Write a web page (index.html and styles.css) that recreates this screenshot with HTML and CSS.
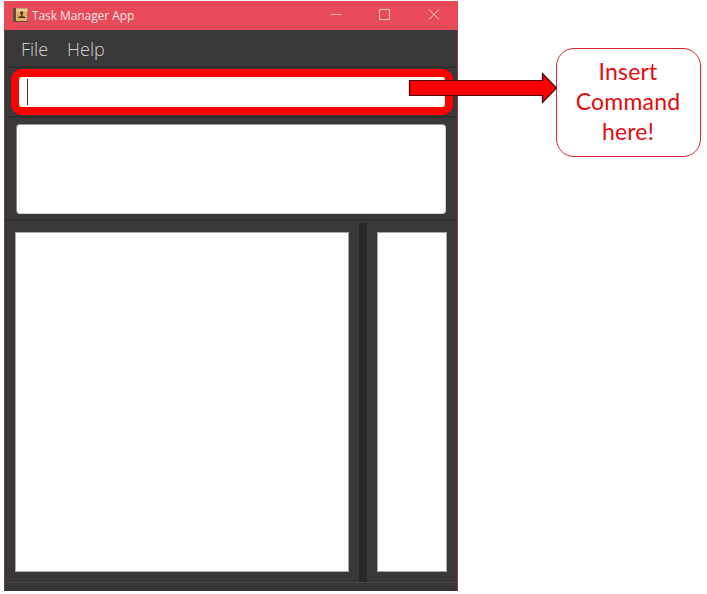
FILE: index.html
```html
<!DOCTYPE html>
<html lang="en">
<head>
<meta charset="utf-8">
<title>Task Manager App</title>
<link rel="stylesheet" href="styles.css">
</head>
<body>
<main class="stage">
  <section class="window">
    <header class="titlebar">
      <svg class="app-icon" width="15" height="14" viewBox="0 0 15 14">
        <rect width="15" height="14" rx="1" fill="#5d4a3a"/>
        <rect x="3" y="0.5" width="11.5" height="12.5" fill="#dfae66"/>
        <path d="M3 .5h11.500v3H3z" fill="#ecc98c"/>
        <circle cx="8.700" cy="4.800" r="1.600" fill="#4a341c"/>
        <path d="M8 6h1.500v2.200l2.700.5v1.300H5.200V8.700l2.800-.5z" fill="#4a341c"/>
      </svg>
      <span class="title">Task Manager App</span>
      <svg class="controls" width="110" height="12" viewBox="0 0 110 12" fill="none" stroke="#ffc4ca">
        <path d="M0 5.500h10.500M48.500 .5h10v10h-10zM98 .5l10 10M108 .5l-10 10"/>
      </svg>
    </header>
    <nav class="menu"><span class="file">File</span><span class="help">Help</span></nav>
    <div class="command-row"><div class="command"><i class="caret"></i></div></div>
    <div class="result-row"><div class="result"></div></div>
    <div class="panels">
      <div class="list"></div>
      <div class="divider"></div>
      <div class="side"></div>
    </div>
    <footer class="status"></footer>
  </section>
  <aside class="callout">Insert<br>Command<br>here!</aside>
  <svg class="arrow" width="150" height="34" viewBox="0 0 150 34">
    <path d="M1.500 9.500H134.500V2.500L148.500 17L134.500 31.500V24.500H1.500z" fill="#f00" stroke="#4a0808" stroke-width="1.200"/>
  </svg>
</main>
</body>
</html>
```
FILE: styles.css
```css
* { box-sizing: border-box; }
body { margin: 0; background: #fff; }
.stage {
  position: relative;
  display: flex;
  align-items: flex-start;
  width: 707px;
  height: 594px;
  padding: 1px 0 0 4px;
  overflow: hidden;
}
.window {
  display: flex;
  flex-direction: column;
  width: 454px;
  height: 590px;
  background: #383838;
  border-left: 1px solid #633c41;
  border-right: 1px solid #a62f40;
}
.titlebar {
  display: flex;
  align-items: center;
  height: 29px;
  margin: 0 -1px;
  padding: 0 17px 1px 9px;
  background: #e84a5a;
}
.title {
  margin-left: 4px;
  padding-top: 2px;
  font: 12px/20px "Open Sans", "Noto Sans", sans-serif;
  letter-spacing: -0.08px;
  color: #ffe4e6;
}
.controls { margin-left: auto; }
.menu {
  display: flex;
  height: 38px;
  padding-left: 16px;
  gap: 19px;
  border-bottom: 2px solid #303030;
  font: 300 18px/38px "Open Sans", "Noto Sans", sans-serif;
  color: #d2d2d2;
}
.command-row {
  height: 50px;
  padding: 1px 4px 2px 6px;
  border-bottom: 2px solid #303030;
}
.command {
  height: 46px;
  padding: 2px 0 0 8px;
  background: #fff;
  border: 8px solid #f00;
  border-radius: 11px;
}
.caret { display: block; width: 1px; height: 26px; background: #333; }
.result-row {
  height: 103px;
  padding: 6px 11px 5px 11px;
  border-bottom: 2px solid #303030;
}
.result {
  height: 90px;
  background: #fff;
  border: 1px solid #d5d5d5;
  border-top-color: #999;
  border-left-color: #888;
  border-radius: 4px;
}
.panels { display: flex; height: 361px; padding: 2px 10px 0 10px; }
.list { width: 334px; height: 340px; margin-top: 9px; background: #fff; border: 1px solid #aaa; }
.divider { width: 8px; height: 359px; margin: 0 10px; background: #292929; }
.side { width: 70px; height: 340px; margin-top: 9px; background: #fff; border: 1px solid #aaa; }
.status { flex: 1; border-top: 1px solid #454545; background: #363636; }
.callout {
  width: 145px;
  height: 109px;
  margin: 47px 0 0 98px;
  padding: 7px 1px 0 0;
  border: 1px solid #dc2330;
  border-radius: 18px;
  font: 23px/30px Lato, sans-serif;
  letter-spacing: 0.2px;
  text-align: center;
  color: #e20c10;
}
.arrow { position: absolute; left: 408px; top: 71px; }
```
